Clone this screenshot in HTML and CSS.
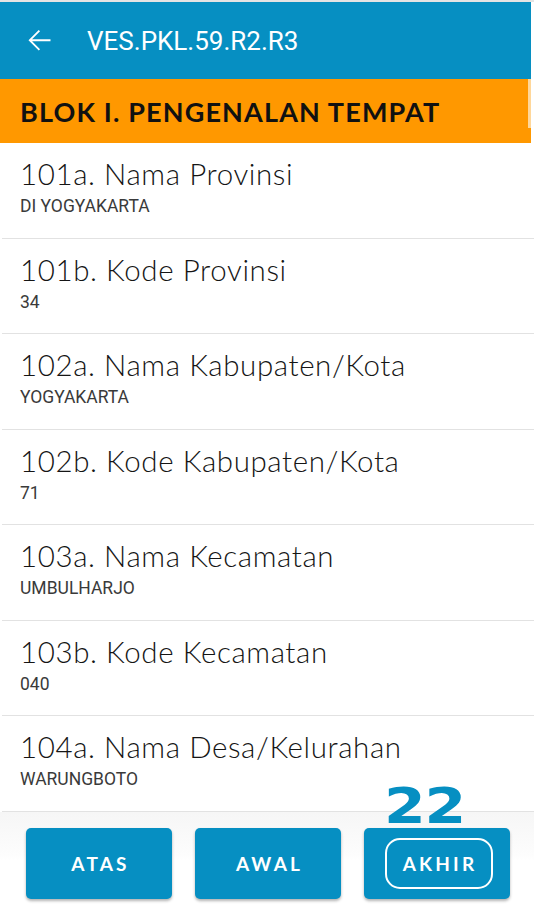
FILE: index.html
```html
<!DOCTYPE html>
<html>
<head>
<meta charset="utf-8">
<link rel="stylesheet" href="styles.css">
</head>
<body>
<div class="screen">
  <header class="appbar">
    <svg class="back" viewBox="0 0 24 24"><path d="M20 11.1H6.6l5.8-5.8-0.95-0.95L4 11.8l7.45 7.45 0.95-0.95-5.8-5.8H20z" fill="#fff"/></svg>
    <span class="title">VES.PKL.59.R2.R3</span>
  </header>
  <div class="block">
    <span>BLOK I. PENGENALAN TEMPAT</span>
    <span class="scroll"></span>
  </div>
  <ul class="list">
    <li class="row"><div class="label">101a. Nama Provinsi</div><div class="value">DI YOGYAKARTA</div></li>
    <li class="row"><div class="label">101b. Kode Provinsi</div><div class="value">34</div></li>
    <li class="row"><div class="label">102a. Nama Kabupaten/Kota</div><div class="value">YOGYAKARTA</div></li>
    <li class="row"><div class="label">102b. Kode Kabupaten/Kota</div><div class="value">71</div></li>
    <li class="row"><div class="label">103a. Nama Kecamatan</div><div class="value">UMBULHARJO</div></li>
    <li class="row"><div class="label">103b. Kode Kecamatan</div><div class="value">040</div></li>
    <li class="row"><div class="label">104a. Nama Desa/Kelurahan</div><div class="value">WARUNGBOTO</div></li>
  </ul>
  <nav class="bottom">
    <button class="btn">ATAS</button>
    <button class="btn">AWAL</button>
    <button class="btn last"><span class="count">22</span><span class="ring">AKHIR</span></button>
  </nav>
</div>
</body>
</html>
```
FILE: styles.css
```css
* { box-sizing: border-box; }
html, body { margin: 0; padding: 0; background: #fff; }
.screen {
  width: 534px;
  height: 909px;
  overflow: hidden;
  display: flex;
  flex-direction: column;
  border-top: 2px solid #e4e4e4;
}
.appbar {
  height: 77px;
  flex: none;
  background: #068fc2;
  margin-right: 3px;
  display: flex;
  align-items: center;
  padding-left: 23px;
  gap: 31px;
}
.back { width: 33px; height: 33px; flex: none; }
.title {
  color: #fff;
  font-family: Roboto, sans-serif;
  font-size: 26px;
}
.block {
  height: 64px;
  flex: none;
  background: #ff9800;
  margin-right: 3px;
  display: flex;
  align-items: center;
  padding-left: 20px;
  position: relative;
  font-family: Lato, sans-serif;
  font-weight: 700;
  font-size: 27px;
  color: #111;
  letter-spacing: 1.15px;
}
.scroll {
  position: absolute;
  right: 0;
  top: 0;
  width: 3px;
  height: 49px;
  background: #ffd79a;
}
.list { list-style: none; margin: 0; padding: 0; flex: none; }
.row {
  height: 95.5px;
  border-bottom: 1px solid #e2e2e2;
  margin-left: 2px;
  padding: 13px 0 0 18px;
}
.label {
  font-family: Lato, sans-serif;
  font-weight: 300;
  font-size: 29.5px;
  color: #151515;
  line-height: 36px;
  letter-spacing: 0.6px;
}
.value {
  font-family: Roboto, sans-serif;
  font-size: 17.5px;
  color: #3a3a3a;
  margin-top: 4px;
  line-height: 21px;
}
.bottom {
  flex: 1;
  background: linear-gradient(#f6f6f6, #fdfdfd 45%, #fff 50%);
  display: flex;
  gap: 23px;
  padding: 16px 0 0 26px;
}
.btn {
  width: 146px;
  height: 71px;
  border: none;
  border-radius: 5px;
  background: #068fc2;
  color: #fff;
  font-family: Lato, sans-serif;
  font-weight: 700;
  font-size: 19px;
  letter-spacing: 3.2px;
  box-shadow: 0 2px 3px rgba(0,0,0,0.3);
  display: flex;
  align-items: center;
  justify-content: center;
  padding: 0 0 0 3px;
  position: relative;
}
.ring {
  display: flex;
  align-items: center;
  justify-content: center;
  width: 108px;
  height: 51px;
  border: 2.5px solid #fff;
  border-radius: 15px;
  padding-left: 3px;
}
.count {
  position: absolute;
  left: 20px;
  top: -47px;
  color: #068fc2;
  font-family: "DejaVu Sans", sans-serif;
  font-weight: 700;
  font-size: 50px;
  line-height: 50px;
  letter-spacing: -1px;
  transform: scaleX(1.2);
  transform-origin: left center;
}
```
